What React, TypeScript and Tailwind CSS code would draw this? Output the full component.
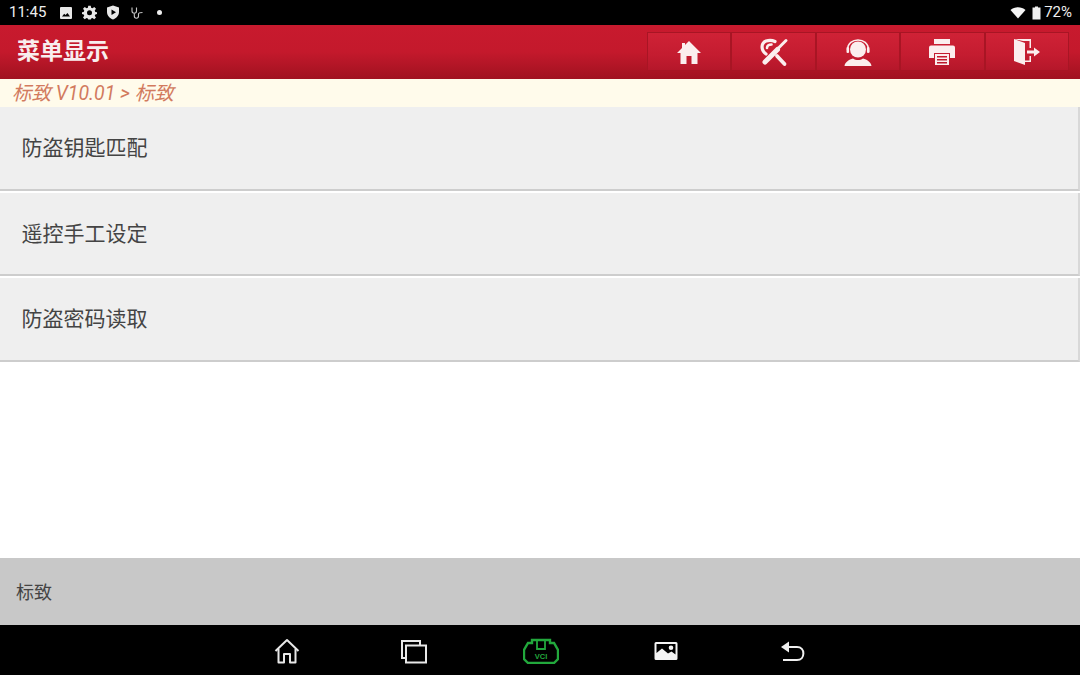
const CJK = 'font-["Roboto","Noto_Sans_CJK_SC",sans-serif]';

function HomeIcon() {
  return (
    <svg width="26" height="26" viewBox="0 0 26 26" fill="#fbeeee">
      <path d="M13 2 L25 14 H21.5 V25 H15.5 V17 H10.5 V25 H4.5 V14 H1 L6 9 V4 H9 V6 Z" />
    </svg>
  );
}

function ToolsIcon() {
  return (
    <svg width="30" height="30" viewBox="0 0 30 30" fill="none" stroke="#fbeeee" strokeLinecap="round">
      {/* wrench head and handle */}
      <path d="M7 17 C1.5 13 2 6 7 4 C10 3 13 3 16 4.5" strokeWidth="3.2" />
      <path d="M8 11 C8 8.5 10 7.5 12.5 7.5" strokeWidth="2.6" />
      <path d="M18 19 L25.5 27" strokeWidth="3.8" />
      {/* screwdriver */}
      <path d="M27 3.5 L19 11.5" strokeWidth="3" />
      <path d="M18.5 12.5 L6 25" strokeWidth="5" />
    </svg>
  );
}

function AgentIcon() {
  return (
    <svg width="30" height="30" viewBox="0 0 30 30" fill="none">
      <path d="M4.5 13 C4.5 -0.5 25.5 -0.5 25.5 13 V15" stroke="#fbeeee" strokeWidth="1.5" />
      <circle cx="15" cy="12.5" r="8" fill="#fbeeee" />
      <rect x="3.5" y="10" width="2.6" height="6" rx="1.1" fill="#fbeeee" />
      <rect x="23.9" y="10" width="2.6" height="6" rx="1.1" fill="#fbeeee" />
      <path d="M1.5 29 C2 25 6 22.5 10 21.5 C13 23.5 17 23.5 20 21.5 C24 22.5 28 25 28.5 29 Z" fill="#fbeeee" />
    </svg>
  );
}

function PrinterIcon() {
  return (
    <svg width="28" height="28" viewBox="0 0 28 28" fill="#fbeeee">
      <rect x="6" y="1" width="16" height="5" />
      <path d="M3 7.5 H25 A2 2 0 0 1 27 9.5 V20 H22 V15 H6 V20 H1 V9.5 A2 2 0 0 1 3 7.5 Z" />
      <path d="M7 16 H21 V27 H7 Z M9 18 V19.5 H19 V18 Z M9 21 V22.5 H19 V21 Z M9 24 V25.5 H19 V24 Z" fillRule="evenodd" />
    </svg>
  );
}

function ExitIcon() {
  return (
    <svg width="28" height="28" viewBox="0 0 28 28" fill="#fbeeee">
      <path d="M1 1 H18 V10 H16.5 V3 H10 L1 1 Z" />
      <path d="M1 1 L12 5 V27 L1 23 Z" />
      <path d="M16.5 18 H18 V24 H12 V22.5 H16.5 Z" />
      <path d="M14 12.5 H21 V9.5 L27 14 L21 18.5 V15.5 H14 Z" />
    </svg>
  );
}

function VciIcon() {
  return (
    <svg width="36" height="26" viewBox="0 0 36 26" fill="none" stroke="#22a83c" strokeWidth="2.4">
      <path d="M9 2 H27 V5 H31 L35 12 V21 L31 25 H5 L1 21 V12 L5 5 H9 Z" />
      <path d="M14 3 V11 H22 V3" strokeWidth="1.8" />
      <text x="18" y="20.5" textAnchor="middle" fontSize="7.5" fontWeight="700" fill="#22a83c" stroke="none" fontFamily="Liberation Sans, sans-serif">VCI</text>
    </svg>
  );
}

const TOOLBAR = [HomeIcon, ToolsIcon, AgentIcon, PrinterIcon, ExitIcon];
const MENU = ['防盗钥匙匹配', '遥控手工设定', '防盗密码读取'];

export default function App() {
  return (
    <div className={`flex h-[675px] w-[1080px] flex-col overflow-hidden bg-white ${CJK}`}>
      {/* status bar */}
      <div className="flex h-[25px] shrink-0 items-center justify-between bg-black pl-[9px] pr-[8px] text-[15px] text-[#eeeeee]">
        <div className="flex items-center">
          <span className="w-[50px]">11:45</span>
          <svg width="14" height="14" viewBox="0 0 14 14" fill="#e8e8e8">
            <path d="M2 1 H12 A1 1 0 0 1 13 2 V12 A1 1 0 0 1 12 13 H2 A1 1 0 0 1 1 12 V2 A1 1 0 0 1 2 1 Z M3 10.5 H11 L8.5 7 L6.5 9 L5.2 7.8 Z" fillRule="evenodd" />
          </svg>
          <svg className="ml-[9px]" width="15" height="15" viewBox="0 0 24 24" fill="#e8e8e8">
            <path fillRule="evenodd" d="M10 1 H14 L14.6 4.4 L16.8 5.3 L19.6 3.3 L22.4 6.1 L20.4 8.9 L21.3 11 L24 11.6 V14.4 L21.3 15 L20.4 17.1 L22.4 19.9 L19.6 22.7 L16.8 20.7 L14.6 21.6 L14 23 H10 L9.4 21.6 L7.2 20.7 L4.4 22.7 L1.6 19.9 L3.6 17.1 L2.7 15 L0 14.4 V11.6 L2.7 11 L3.6 8.9 L1.6 6.1 L4.4 3.3 L7.2 5.3 L9.4 4.4 Z M12 8.5 A4 4 0 1 0 12 16.5 A4 4 0 1 0 12 8.5 Z" />
          </svg>
          <svg className="ml-[9px]" width="14" height="15" viewBox="0 0 14 15" fill="#e8e8e8">
            <path fillRule="evenodd" d="M7 0.5 L13 2.5 V7 C13 10.5 10.5 13.3 7 14.5 C3.5 13.3 1 10.5 1 7 V2.5 Z M5.5 4.5 V10 L10 7.2 Z" />
          </svg>
          <svg className="ml-[10px]" width="15" height="14" viewBox="0 0 15 14" fill="none" stroke="#c8c8c8" strokeWidth="1.1">
            <path d="M2 1.5 V5 C2 8 6.5 8 6.5 5 V1.5" />
            <path d="M4.3 7.5 V10 C4.3 13 8.5 13 8.5 10 V8 C8.5 6.5 11 6.5 12.5 6.5" />
          </svg>
          <span className="ml-[12px] h-[5px] w-[5px] rounded-full bg-[#eeeeee]" />
        </div>
        <div className="flex items-center">
          <svg width="16" height="13" viewBox="0 0 16 13" fill="#f4f4f4">
            <path d="M0.5 4 C4.5 0.3 11.5 0.3 15.5 4 L8 12.5 Z" />
          </svg>
          <svg className="ml-[6px]" width="9" height="14" viewBox="0 0 9 14" fill="#f0f0f0">
            <path d="M3 0.5 H6 V1.5 H8.5 V13.5 H0.5 V1.5 H3 Z" />
          </svg>
          <span className="ml-[3px]">72%</span>
        </div>
      </div>

      {/* title bar */}
      <div className="flex h-[54px] shrink-0 items-center justify-between bg-[linear-gradient(180deg,#c81a2e_0%,#c4192c_50%,#a01220_100%)] pl-[17px] pr-[11px]">
        <h1 className="pt-[1px] text-[23px] font-bold text-[#f8eeee]">菜单显示</h1>
        <div className="mt-[-1px] flex h-[39px]">
          {TOOLBAR.map((Icon, i) => (
            <button
              key={i}
              className="flex h-full w-[84.4px] items-center justify-center border border-[#a81524] bg-[linear-gradient(180deg,#cf2236_0%,#c41c30_60%,#b5172a_100%)]"
            >
              <Icon />
            </button>
          ))}
        </div>
      </div>

      {/* breadcrumb */}
      <div className="flex h-[28px] shrink-0 items-center bg-[#fffbeb] pt-[1px] pl-[12px] text-[19.5px] italic text-[#d27a5e]">
        标致 V10.01 &gt; 标致
      </div>

      {/* menu */}
      <div className="flex flex-1 flex-col gap-[2px]">
        {MENU.map((label) => (
          <div
            key={label}
            className="flex h-[83.5px] items-center border-r-2 border-b-2 border-r-[#d8d8d8] border-b-[#cdcdcd] bg-[#efefef] pt-[2px] pl-[21.5px] text-[21px] text-[#444444]"
          >
            {label}
          </div>
        ))}
      </div>

      {/* footer */}
      <div className="flex h-[67px] shrink-0 items-center bg-[#c8c8c8] pt-[2px] pl-[16px] text-[18px] text-[#444444]">
        标致
      </div>

      {/* nav bar */}
      <div className="flex h-[50px] shrink-0 items-center justify-center bg-black pt-[2px]">
        <svg className="mr-[4px]" width="26" height="26" viewBox="0 0 26 26" fill="none" stroke="#e8e8e8" strokeWidth="2" strokeLinejoin="round">
          <path d="M1.5 13 L13 2 L24.5 13" />
          <path d="M4.5 11 V24.5 H10 V16 H16 V24.5 H21.5 V11" />
        </svg>
        <svg className="ml-[96px]" width="27" height="25" viewBox="0 0 27 25" fill="none" stroke="#e8e8e8" strokeWidth="2">
          <path d="M6 19 H2 V2 H20 V6" />
          <rect x="6" y="6.5" width="20" height="17" />
        </svg>
        <div className="ml-[96px]">
          <VciIcon />
        </div>
        <svg className="ml-[95px]" width="24" height="20" viewBox="0 0 24 20" fill="#f4f4f4">
          <path fillRule="evenodd" d="M2 1 H22 A1.5 1.5 0 0 1 23.5 2.5 V17.5 A1.5 1.5 0 0 1 22 19 H2 A1.5 1.5 0 0 1 0.5 17.5 V2.5 A1.5 1.5 0 0 1 2 1 Z M2.5 3 V12 L8 7.5 L14 12.5 L17.5 10.5 L21.5 13.5 V3 Z M17 4.5 A2.3 2.3 0 1 0 17 9.1 A2.3 2.3 0 1 0 17 4.5 Z" />
        </svg>
        <svg className="ml-[102px]" width="26" height="22" viewBox="0 0 26 22" fill="none" stroke="#f0f0f0" strokeWidth="2">
          <path d="M4 7 H17 C25.5 7 25.5 20 17 20 H3" />
          <path d="M1 7 L9 1.5 V12.5 Z" fill="#f0f0f0" stroke="none" />
        </svg>
      </div>
    </div>
  );
}
